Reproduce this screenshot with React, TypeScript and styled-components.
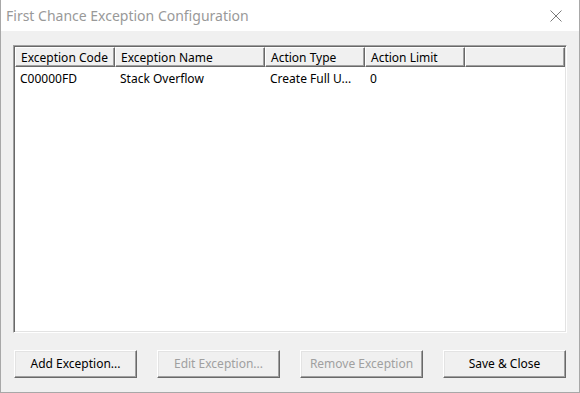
import styled, { createGlobalStyle } from 'styled-components';

const GlobalStyle = createGlobalStyle`
  html, body {
    margin: 0;
    padding: 0;
    background: #ffffff;
  }
  * {
    box-sizing: border-box;
  }
`;

const Window = styled.div`
  width: 580px;
  height: 393px;
  display: flex;
  flex-direction: column;
  border: 1px solid #a8a8a8;
  border-top: none;
  background: #f0f0f0;
  font-family: 'Noto Sans', 'Open Sans', sans-serif;
  font-size: 12px;
  color: #000;
`;

const TitleBar = styled.div`
  height: 31px;
  flex: none;
  background: #ffffff;
  display: flex;
  align-items: center;
  justify-content: space-between;
  padding: 0 0 1px 5px;
`;

const Title = styled.span`
  font-size: 14px;
  color: #999999;
`;

const CloseButton = styled.div`
  width: 46px;
  height: 31px;
  display: flex;
  align-items: center;
  justify-content: center;
  padding: 2px 0 0 0;
`;

const Body = styled.div`
  flex: 1;
  display: flex;
  flex-direction: column;
  padding: 14px 12px 14px 12px;
`;

const ListView = styled.div`
  height: 288px;
  background: #ffffff;
  border-style: solid;
  border-width: 1px;
  border-color: #a0a0a0 #ffffff #ffffff #a0a0a0;
  box-shadow: inset 1px 1px 0 #696969, inset -1px -1px 0 #e3e3e3;
  padding: 1px;
  display: flex;
  flex-direction: column;
`;

const HeaderRow = styled.div`
  display: flex;
  height: 20px;
  flex: none;
`;

const HeaderCell = styled.div<{ $w?: number }>`
  ${(p) => (p.$w ? `width: ${p.$w}px; flex: none;` : 'flex: 1;')}
  background: #f0f0f0;
  border-style: solid;
  border-width: 1px;
  border-color: #ffffff #696969 #696969 #ffffff;
  box-shadow: inset -1px -1px 0 #a0a0a0;
  padding: 1px 5px 0 5px;
  display: flex;
  align-items: center;
  white-space: nowrap;
  overflow: hidden;
`;

const DataRow = styled.div`
  display: flex;
  height: 17px;
  margin-top: 3px;
`;

const DataCell = styled.div<{ $w: number }>`
  width: ${(p) => p.$w}px;
  flex: none;
  padding: 0 4px 0 5px;
  display: flex;
  align-items: center;
  white-space: nowrap;
  overflow: hidden;
`;

const ButtonRow = styled.div`
  display: flex;
  justify-content: space-between;
  margin-top: 17px;
  padding: 0 1px 0 1px;
`;

const Button = styled.div<{ $disabled?: boolean }>`
  width: 123px;
  height: 28px;
  display: flex;
  align-items: center;
  justify-content: center;
  background: #f0f0f0;
  border-style: solid;
  border-width: 1px;
  border-color: #ffffff #696969 #696969 #ffffff;
  box-shadow: inset -1px -1px 0 #a0a0a0, inset 1px 1px 0 #e3e3e3;
  color: ${(p) => (p.$disabled ? '#a0a0a0' : '#000000')};
  padding-bottom: 1px;
`;

const columns = [
  { name: 'Exception Code', w: 100 },
  { name: 'Exception Name', w: 150 },
  { name: 'Action Type', w: 100 },
  { name: 'Action Limit', w: 100 },
];

const rows = [['C00000FD', 'Stack Overflow', 'Create Full U...', '0']];

export default function App() {
  return (
    <>
      <GlobalStyle />
      <Window>
        <TitleBar>
          <Title>First Chance Exception Configuration</Title>
          <CloseButton>
            <svg width="12" height="12" viewBox="0 0 12 12">
              <path d="M0.5 0.5 L11.5 11.5 M11.5 0.5 L0.5 11.5" stroke="#7a7a7a" strokeWidth="1" fill="none" />
            </svg>
          </CloseButton>
        </TitleBar>
        <Body>
          <ListView>
            <HeaderRow>
              {columns.map((c) => (
                <HeaderCell key={c.name} $w={c.w}>
                  {c.name}
                </HeaderCell>
              ))}
              <HeaderCell />
            </HeaderRow>
            {rows.map((r) => (
              <DataRow key={r[0]}>
                {r.map((v, i) => (
                  <DataCell key={i} $w={columns[i].w}>
                    {v}
                  </DataCell>
                ))}
              </DataRow>
            ))}
          </ListView>
          <ButtonRow>
            <Button>Add Exception...</Button>
            <Button $disabled>Edit Exception...</Button>
            <Button $disabled>Remove Exception</Button>
            <Button>Save &amp; Close</Button>
          </ButtonRow>
        </Body>
      </Window>
    </>
  );
}
